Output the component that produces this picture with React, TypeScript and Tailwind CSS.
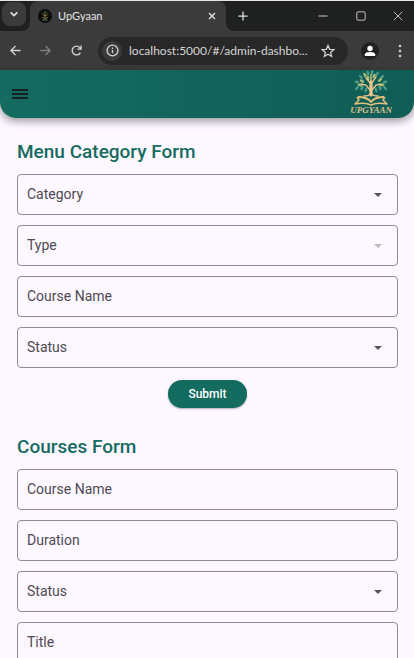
import { useState } from "react";
import type { ReactNode } from "react";

const uiFont = "font-[Lato,'Open_Sans',sans-serif]";
const fieldBox =
  "h-[41px] w-full appearance-none rounded border border-[#8f8b93] bg-transparent px-[9px] pb-px text-[14px] text-[#4d4a52] opacity-100 outline-none placeholder:text-[#4d4a52] focus:border-[#146b60]";

function Stroke({ className, width = 2, children }: { className: string; width?: number; children: ReactNode }) {
  return (
    <svg viewBox="0 0 24 24" className={className} fill="none" stroke="currentColor" strokeWidth={width} aria-hidden="true">
      {children}
    </svg>
  );
}

function TabStrip() {
  return (
    <div className="flex h-[30px] bg-[#1f2120] text-[#e3e3e3]">
      <div className="w-[30px] shrink-0 bg-[#3b3b3b]">
        <div className="h-full rounded-br-lg bg-[#1f2120] py-px pl-[2px]">
          <button aria-label="Search tabs" className="flex size-6 items-center justify-center rounded-lg bg-[#3b3b3b]">
            <Stroke className="size-[10px]" width={4}>
              <path d="M4 8l8 8 8-8" />
            </Stroke>
          </button>
        </div>
      </div>
      <div className="flex w-[196px] shrink-0 items-center rounded-t-lg bg-[#3b3b3b] pr-[6px] pl-2">
        <svg viewBox="0 0 14 14" className="size-[14px]" aria-hidden="true">
          <circle cx="7" cy="7" r="7" fill="#0b0d0c" />
          <path d="M7 4v5M4 8.500l3 1 3-1M4.500 5.500L7 7l2.500-1.500" stroke="#a98c52" strokeWidth=".8" fill="none" />
          <path d="M4 4.500l1-1M6 3h2M9 3.500l1 1M4.500 11h5" stroke="#5d8a62" strokeWidth=".9" />
        </svg>
        <span className="ml-[6px] grow text-[11px]">UpGyaan</span>
        <button aria-label="Close tab" className="flex size-4 items-center justify-center">
          <Stroke className="size-2" width={4}>
            <path d="M3 3l18 18M21 3L3 21" />
          </Stroke>
        </button>
      </div>
      <div className="grow bg-[#3b3b3b]">
        <div className="flex h-full justify-between rounded-bl-lg bg-[#1f2120]">
          <button aria-label="New tab" className="flex w-[34px] items-center justify-center">
            <Stroke className="size-[10px]" width={3}>
              <path d="M12 1v22M1 12h22" />
            </Stroke>
          </button>
          <div className="flex">
            <button aria-label="Minimize" className="flex w-[38px] items-center justify-center">
              <Stroke className="size-[10px]">
                <path d="M1 12h22" />
              </Stroke>
            </button>
            <button aria-label="Maximize" className="flex w-[38px] items-center justify-center">
              <Stroke className="size-[10px]">
                <rect x="2" y="2" width="20" height="20" rx="2" />
              </Stroke>
            </button>
            <button aria-label="Close" className="flex w-[34px] items-center justify-center pl-[2px]">
              <Stroke className="size-[10px]">
                <path d="M2 2l20 20M22 2L2 22" />
              </Stroke>
            </button>
          </div>
        </div>
      </div>
    </div>
  );
}

function Toolbar() {
  const [url, setUrl] = useState("localhost:5000/#/admin-dashbo...");
  return (
    <div className="flex h-[39px] items-center bg-[#3b3b3b] pr-[6px] text-[#d2d2d2]">
      <button aria-label="Back" className="flex w-[30px] items-center justify-center">
        <Stroke className="size-[11px]" width={3}>
          <path d="M23 12H3M12 2L2 12l10 10" />
        </Stroke>
      </button>
      <button aria-label="Forward" className="flex w-[30px] items-center justify-center text-[#818181]">
        <Stroke className="size-[11px]" width={3}>
          <path d="M1 12h20M12 2l10 10-10 10" />
        </Stroke>
      </button>
      <button aria-label="Reload" className="flex w-8 items-center justify-center">
        <Stroke className="size-[11px]" width={3}>
          <path d="M20.500 16.500A9.500 9.500 0 1 1 19 5.500l3 3.500M22 1v8h-8" />
        </Stroke>
      </button>
      <div className="ml-[6px] flex h-7 min-w-0 grow items-center rounded-full bg-[#282828] pr-3 pl-1">
        <button aria-label="View site information" className="flex size-5 shrink-0 items-center justify-center rounded-full bg-[#3b3b3b]">
          <Stroke className="size-[13px]" width={2.4}>
            <circle cx="12" cy="12" r="10" />
            <path d="M12 11v6M12 6.500v2.500" />
          </Stroke>
        </button>
        <input
          aria-label="Address and search bar"
          value={url}
          onChange={(e) => setUrl(e.target.value)}
          className="ml-[7px] min-w-0 grow bg-transparent text-[12px] text-[#d5d5d5] outline-none"
        />
        <button aria-label="Bookmark this tab" className="flex size-4 shrink-0 items-center justify-center">
          <Stroke className="size-[14px]" width={2.2}>
            <path d="M12 2.500l2.800 6.600 7.200.6-5.500 4.700 1.700 7L12 17.600l-6.200 3.800 1.700-7L2 9.700l7.200-.6z" />
          </Stroke>
        </button>
      </div>
      <button aria-label="Profile" className="ml-[13px] flex size-[18px] items-center justify-center rounded-full bg-[#1f2120] text-white">
        <svg viewBox="0 0 12 12" className="size-3" fill="currentColor" aria-hidden="true">
          <circle cx="6" cy="3.500" r="2.700" />
          <path d="M.8 11V9.500C.8 7.700 4 7 6 7s5.200.7 5.200 2.500V11z" />
        </svg>
      </button>
      <button aria-label="More" className="ml-[13px] flex w-4 items-center justify-center">
        <svg viewBox="0 0 4 14" className="h-[14px] w-1" fill="currentColor" aria-hidden="true">
          <circle cx="2" cy="2" r="1.300" />
          <circle cx="2" cy="7" r="1.300" />
          <circle cx="2" cy="12" r="1.300" />
        </svg>
      </button>
    </div>
  );
}

function Leaf({ x, y, angle }: { x: number; y: number; angle: number }) {
  return <ellipse cx={x} cy={y} rx="1.300" ry="2.500" transform={`rotate(${angle} ${x} ${y})`} />;
}

function Logo() {
  return (
    <div className="flex flex-col items-center self-start">
      <svg viewBox="0 0 34 36" className="h-9 w-[34px]" fill="none" aria-hidden="true">
        <g fill="#4f9a86">
          <Leaf x={14} y={3} angle={-20} />
          <Leaf x={18} y={2.5} angle={10} />
          <Leaf x={23} y={4} angle={35} />
          <Leaf x={7} y={7} angle={-50} />
          <Leaf x={28} y={7} angle={50} />
          <Leaf x={3} y={12} angle={-70} />
          <Leaf x={31} y={12} angle={70} />
          <Leaf x={3} y={18} angle={40} />
          <Leaf x={8} y={18} angle={30} />
          <Leaf x={12} y={20} angle={15} />
          <Leaf x={31} y={18} angle={-40} />
          <Leaf x={26} y={18} angle={-30} />
          <Leaf x={22} y={20} angle={-15} />
        </g>
        <g fill="#a9bd7c">
          <Leaf x={11} y={5} angle={-30} />
          <Leaf x={20} y={6} angle={25} />
          <Leaf x={26} y={10} angle={50} />
          <Leaf x={8} y={11} angle={-60} />
          <Leaf x={14} y={8} angle={-10} />
          <Leaf x={6} y={15} angle={-80} />
          <Leaf x={28} y={15} angle={80} />
        </g>
        <g stroke="#e9c98b" strokeLinecap="round">
          <path d="M17 25V12" strokeWidth="3.200" />
          <path d="M16 20l-4-5-5-1M18 20l4-5 5-1M17 14l-5-6M17 14l5-7M17 12V5" strokeWidth="1.300" />
          <path d="M16 24c-1 2-4 2-6 2M18 24c1 2 4 2 6 2" strokeWidth="1.500" />
        </g>
        <g stroke="#e3bf7c" strokeLinejoin="round">
          <path d="M3 27l2 3-4 4c6-1 12-1 16 1 4-2 10-2 16-1l-4-4 2-3" strokeWidth="1.500" />
          <path d="M4 27c6 0 10 1 13 5 3-4 7-5 13-5" strokeWidth="2" />
        </g>
      </svg>
      <span className="font-['Liberation_Serif',serif] text-[9px] leading-[9px] font-bold text-[#d9c08a] italic">UPGYAAN</span>
    </div>
  );
}

function AppHeader() {
  return (
    <header className="flex h-12 items-center justify-between rounded-b-2xl bg-linear-to-r from-[#146b60] to-[#105d56] pr-[22px] pl-3 shadow-[0_3px_8px_rgba(0,0,0,0.4)]">
      <button aria-label="Open menu" className="text-[#17201f]">
        <svg viewBox="0 0 16 12" className="h-3 w-4" stroke="currentColor" strokeWidth="2" aria-hidden="true">
          <path d="M0 2h16M0 6h16M0 10h16" />
        </svg>
      </button>
      <Logo />
    </header>
  );
}

function TextField({ label }: { label: string }) {
  return <input aria-label={label} placeholder={label} className={fieldBox} />;
}

function SelectField({ label, options = [], disabled = false }: { label: string; options?: string[]; disabled?: boolean }) {
  return (
    <div className="relative">
      <select aria-label={label} disabled={disabled} defaultValue="" className={fieldBox}>
        <option value="" disabled>
          {label}
        </option>
        {options.map((option) => (
          <option key={option}>{option}</option>
        ))}
      </select>
      <svg
        viewBox="0 0 8 4"
        className={`pointer-events-none absolute top-[19px] right-4 h-1 w-2 ${disabled ? "text-[#bcb8be]" : "text-[#56525a]"}`}
        fill="currentColor"
        aria-hidden="true"
      >
        <path d="M0 0h8L4 4z" />
      </svg>
    </div>
  );
}

function Section({ title, children }: { title: string; children: ReactNode }) {
  return (
    <form className="flex flex-col gap-[10px]" onSubmit={(e) => e.preventDefault()}>
      <h2 className="text-[19px] leading-6 font-medium text-[#146b60]">{title}</h2>
      {children}
    </form>
  );
}

export default function App() {
  return (
    <div className="h-screen overflow-hidden bg-[#fdf7ff] font-[Roboto,sans-serif]">
      <div className={`border-t border-[#e6e6e6] ${uiFont}`}>
        <TabStrip />
        <Toolbar />
      </div>
      <AppHeader />
      <main className="flex flex-col gap-[27px] pt-[22px] pr-4 pl-[17px]">
        <Section title="Menu Category Form">
          <SelectField label="Category" />
          <SelectField label="Type" disabled />
          <TextField label="Course Name" />
          <SelectField label="Status" />
          <button className="mt-[2px] h-7 self-center rounded-full bg-[#146b60] px-5 text-[12px] font-medium text-white shadow-[0_1px_2px_rgba(0,0,0,0.3)]">
            Submit
          </button>
        </Section>
        <Section title="Courses Form">
          <TextField label="Course Name" />
          <TextField label="Duration" />
          <SelectField label="Status" />
          <TextField label="Title" />
        </Section>
      </main>
    </div>
  );
}
